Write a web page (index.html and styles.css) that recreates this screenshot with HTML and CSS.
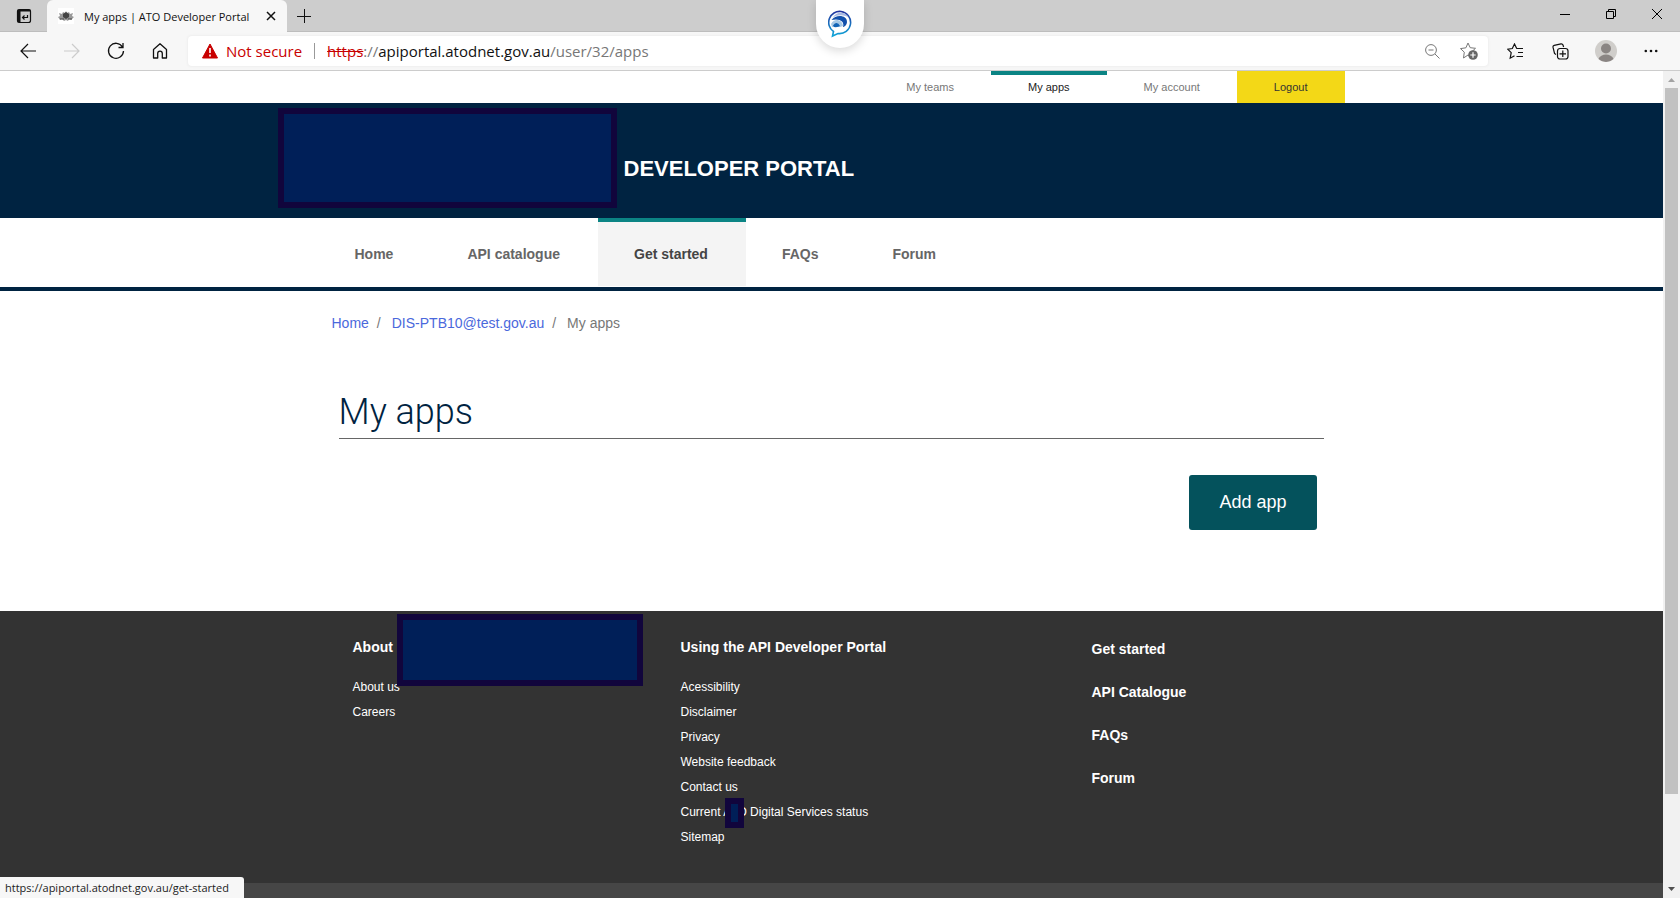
FILE: index.html
```html
<!DOCTYPE html>
<html lang="en">
<head>
<meta charset="utf-8">
<title>My apps | ATO Developer Portal</title>
<link rel="stylesheet" href="styles.css">
</head>
<body>
<div class="browser">
  <div class="tabbar">
    <button class="icon-btn tab-actions" aria-label="Tab actions"><svg width="16" height="16" viewBox="0 0 16 16"><rect x="1.5" y="1.5" width="13" height="13" rx="2" fill="none" stroke="#111" stroke-width="1.2"/><path d="M1.5 3h3v11.500h-3zM1.500 1.500h13v2h-13z" fill="#111"/><path d="M11.500 7v2.500h-5M8.500 7.500l-2 2 2 2" fill="none" stroke="#111" stroke-width="1.200"/></svg></button>
    <div class="tab">
      <svg width="16" height="16" viewBox="0 0 16 16"><rect width="16" height="16" fill="#fff"/><path d="M1 5l3 1 1-2 2 1 1-2 1 2 2-1 1 2 3-1-1 3 2 1-3 3-2-1-1 2-2-1-2 1-2-2-2 1-2-3 2-1z" fill="#999"/><path d="M5 6l3-2 3 2v3l-3 2-3-2z" fill="#444"/><path d="M2 11h4M10 11h4M7 7h2" stroke="#444"/></svg>
      <span class="tab-title">My apps | ATO Developer Portal</span>
      <button class="icon-btn tab-close" aria-label="Close tab"><svg width="10" height="10" viewBox="0 0 10 10"><path d="M1 1l8 8M9 1l-8 8" stroke="#111" stroke-width="1.500"/></svg></button>
    </div>
    <button class="icon-btn new-tab" aria-label="New tab"><svg width="14" height="14" viewBox="0 0 14 14"><path d="M7.500 0v14M0 7.500h14" stroke="#111"/></svg></button>
    <div class="window-controls">
      <button class="icon-btn" aria-label="Minimize"><svg width="10" height="10" viewBox="0 0 10 10"><path d="M0 5.500h10" stroke="#000"/></svg></button>
      <button class="icon-btn" aria-label="Restore"><svg width="10" height="10" viewBox="0 0 10 10"><path d="M.5 2.500h7v7h-7zM2.500 2.500v-2h7v7h-2" fill="none" stroke="#000"/></svg></button>
      <button class="icon-btn" aria-label="Close"><svg width="10" height="10" viewBox="0 0 10 10"><path d="M0 0l10 10M10 0L0 10" stroke="#000"/></svg></button>
    </div>
  </div>
  <div class="toolbar">
    <div class="nav-buttons">
      <button class="icon-btn" aria-label="Back"><svg width="16" height="16" viewBox="0 0 16 16"><path d="M16 8H1M8 1L1 8l7 7" fill="none" stroke="#111" stroke-width="1.200"/></svg></button>
      <button class="icon-btn" aria-label="Forward"><svg width="16" height="16" viewBox="0 0 16 16"><path d="M0 8h15M8 1l7 7-7 7" fill="none" stroke="#ccc" stroke-width="1.200"/></svg></button>
      <button class="icon-btn" aria-label="Refresh"><svg width="18" height="18" viewBox="0 0 18 18"><path d="M15.500 5A7.500 7.500 0 1 0 16.500 9M16 1v4.500h-4.500" fill="none" stroke="#111" stroke-width="1.300"/></svg></button>
      <button class="icon-btn" aria-label="Home"><svg width="16" height="16" viewBox="0 0 16 16"><path d="M1.500 6.500L8 .8l6.500 5.700V15h-4.200v-4.500a2.300 2.300 0 0 0-4.600 0V15H1.500z" fill="none" stroke="#111" stroke-width="1.300" stroke-linejoin="round"/></svg></button>
    </div>
    <div class="address">
      <svg width="16" height="16" viewBox="0 0 16 16"><path d="M8 1l7.500 14H.5z" fill="#c80000" stroke="#c80000" stroke-linejoin="round"/><path d="M8 5v5M8 11.500v2" stroke="#fff" stroke-width="1.600"/></svg>
      <span class="not-secure">Not secure</span>
      <span class="divider"></span>
      <span class="url"><s>https</s>://<b>apiportal.atodnet.gov.au</b>/user/32/apps</span>
      <button class="icon-btn zoom-btn" aria-label="Zoom"><svg width="15" height="15" viewBox="0 0 15 15"><circle cx="6" cy="6" r="5.400" fill="none" stroke="#777"/><path d="M3.500 6h5M10 10l4.500 4.500" stroke="#777"/></svg></button>
      <button class="icon-btn" aria-label="Add favorite"><svg width="18" height="18" viewBox="0 0 18 18"><path d="M8 1l2.200 4.700 5.300.6-4 3.700 1 5.500L8 13l-4.500 3 .8-5.800-3.800-3.600 5.400-.8z" fill="none" stroke="#777"/><circle cx="13" cy="13" r="4.800" fill="#666"/><path d="M13 10.300v5.400M10.300 13h5.400" stroke="#fff" stroke-width="1.200"/></svg></button>
    </div>
    <div class="toolbar-right">
      <button class="icon-btn" aria-label="Favorites"><svg width="17" height="17" viewBox="0 0 17 17"><path d="M9.700 5.500L7.500 1 5.300 5.500.7 6.200l3.500 3.400-1 5.600 4.300-2.500M9.500 5.500H16M11 9.500h5M9.500 13.500H16" fill="none" stroke="#111" stroke-width="1.200"/></svg></button>
      <button class="icon-btn" aria-label="Collections"><svg width="17" height="17" viewBox="0 0 17 17"><path d="M4 11.500L2.500 10.500 1 4.200Q.8 2.700 2.200 2.300L9 .8q1.500-.2 2 1.200l.6 2" fill="none" stroke="#111" stroke-width="1.200"/><rect x="5.500" y="5.500" width="10.500" height="10.500" rx="2.500" fill="none" stroke="#111" stroke-width="1.200"/><path d="M10.800 7.500v6.500M7.500 10.800h6.500" stroke="#111" stroke-width="1.200"/></svg></button>
      <button class="icon-btn" aria-label="Profile"><svg width="22" height="22" viewBox="0 0 22 22"><circle cx="11" cy="11" r="11" fill="#d0cecb"/><circle cx="11" cy="8.500" r="5" fill="#8a8583"/><path d="M3.500 19c2-6 13-6 15 0a11 11 0 0 1-15 0z" fill="#8a8583"/></svg></button>
      <button class="icon-btn" aria-label="Settings and more"><svg width="14" height="4" viewBox="0 0 14 4"><g fill="#111"><circle cx="1.800" cy="2" r="1.300"/><circle cx="7" cy="2" r="1.300"/><circle cx="12.200" cy="2" r="1.300"/></g></svg></button>
    </div>
  </div>
  <div class="chat-widget"><svg width="26" height="28" viewBox="0 0 26 28"><defs><linearGradient id="ring" x1="0" y1="0" x2="0" y2="1"><stop offset="0" stop-color="#2335a0"/><stop offset="1" stop-color="#10a5d8"/></linearGradient></defs><path d="M13 1.500a11 11 0 1 1-3 22L4.500 26l1-4.500A11 11 0 0 1 13 1.500z" fill="#fff" stroke="url(#ring)" stroke-width="1.600"/><path d="M4.500 8C8 1 18 1 21 8c-3-3-12-4-16.500 0z" fill="#a9b9e2"/><path d="M3.500 10C8 4 19 5 19 12c0 3-3 5-4 5 2-6-4-9-11.500-7z" fill="#1250ac"/><path d="M3 14c3-6 11-5 12 2l-3 1H4z" fill="#a7c9e6"/><path d="M5 15.500q4-5 7 .5-2 1.500-6 1z" fill="#1264b6"/></svg></div>
  <div class="viewport">
    <div class="page">
      <nav class="account-nav" aria-label="Account">
        <a href="#">My teams</a><a href="#" class="current">My apps</a><a href="#">My account</a><a href="#" class="logout">Logout</a>
      </nav>
      <header class="banner">
        <div class="container"><span class="redaction redaction-logo"></span><span class="brand">DEVELOPER PORTAL</span></div>
      </header>
      <div class="main-nav">
        <nav class="container" aria-label="Main">
          <a href="#">Home</a><a href="#">API catalogue</a><a href="#" class="current">Get started</a><a href="#">FAQs</a><a href="#">Forum</a>
        </nav>
      </div>
      <main class="container">
        <nav class="breadcrumb" aria-label="Breadcrumb"><a href="#">Home</a><span class="slash">/</span><a href="#">DIS-PTB10@test.gov.au</a><span class="slash">/</span><span>My apps</span></nav>
        <div class="content">
          <h1>My apps</h1>
          <div class="actions"><button class="add-app">Add app</button></div>
        </div>
      </main>
      <footer class="footer">
        <div class="container columns">
          <section>
            <h2>About<span class="redaction redaction-about"></span></h2>
            <ul><li><a href="#">About us</a></li><li><a href="#">Careers</a></li></ul>
          </section>
          <section>
            <h2>Using the API Developer Portal</h2>
            <ul><li><a href="#">Acessibility</a></li><li><a href="#">Disclaimer</a></li><li><a href="#">Privacy</a></li><li><a href="#">Website feedback</a></li><li><a href="#">Contact us</a></li><li><a href="#">Current <span class="masked">ATO<span class="redaction redaction-word"></span></span> Digital Services status</a></li><li><a href="#">Sitemap</a></li></ul>
          </section>
          <section class="quick"><a href="#">Get started</a><a href="#">API Catalogue</a><a href="#">FAQs</a><a href="#">Forum</a></section>
        </div>
      </footer>
      <div class="footer-base"></div>
    </div>
    <div class="scrollbar"><svg width="17" height="17" viewBox="0 0 17 17"><path d="M5 11l3.500-4 3.500 4z" fill="#a3a3a3"/></svg><div class="track"><div class="thumb"></div></div><svg width="17" height="17" viewBox="0 0 17 17"><path d="M5 6l3.500 4L12 6z" fill="#505050"/></svg></div>
    <div class="status">https://apiportal.atodnet.gov.au/get-started</div>
  </div>
</div>
</body>
</html>
```
FILE: styles.css
```css
* { box-sizing: border-box; }
body { margin: 0; background: #fff; font-family: "Liberation Sans", Arial, sans-serif; }
a { color: inherit; text-decoration: none; }
ul { list-style: none; margin: 0; padding: 0; }
svg { display: block; flex: none; }
.browser { display: flex; flex-direction: column; height: 100vh; overflow: hidden; position: relative; }
.icon-btn { display: flex; align-items: center; justify-content: center; padding: 0; border: 0; background: none; flex: none; }

.tabbar { display: flex; height: 32px; flex: none; background: #cdcdcd; border-bottom: 1px solid #bdbdbd; }
.tab-actions { width: 47px; }
.tab { display: flex; align-items: center; width: 240px; height: 32px; padding: 0 11px; background: #f7f7f7; border-radius: 6px 6px 0 0; font: 11px "Open Sans", "Noto Sans", sans-serif; color: #111; }
.tab-title { margin-left: 10px; white-space: nowrap; flex: 1; }
.new-tab { width: 34px; }
.window-controls { display: flex; margin-left: auto; }
.window-controls .icon-btn { width: 46px; height: 28px; }

.toolbar { display: flex; align-items: center; height: 39px; flex: none; background: #f7f7f7; border-bottom: 1px solid #ccc; }
.nav-buttons { display: flex; padding-left: 6px; width: 188px; }
.nav-buttons .icon-btn { width: 44px; height: 32px; }
.address { display: flex; align-items: center; flex: 1; height: 30px; padding: 0 10px 0 14px; background: #fff; border-radius: 4px; font: 15px "Open Sans", "Noto Sans", sans-serif; box-shadow: 0 0 3px #e4e4e4; }
.not-secure { margin-left: 8px; color: #c80000; }
.divider { width: 1px; height: 16px; margin: 0 12px; background: #999; }
.url { color: #777; white-space: nowrap; flex: 1; }
.url s { color: #c80000; }
.url b { color: #111; font-weight: 400; }
.zoom-btn { margin-right: 20px; }
.toolbar-right { display: flex; width: 192px; padding-left: 5px; }
.toolbar-right .icon-btn { width: 45px; height: 32px; }

.chat-widget { position: absolute; z-index: 2; top: 0; left: 50%; width: 48px; height: 48px; margin-left: -24px; padding: 10px 0 0 12px; background: #fff; border-radius: 0 0 24px 24px; box-shadow: 0 3px 10px rgba(0,0,0,.15); }

.viewport { display: flex; flex: 1; min-height: 0; position: relative; }
.page { flex: 1; min-width: 0; overflow: hidden; display: flex; flex-direction: column; }
.container { width: 1026px; margin: 0 auto; }

.account-nav { display: flex; justify-content: flex-end; width: 1026px; margin: 0 auto; height: 32px; flex: none; font-size: 11px; color: #777; }
.account-nav a { padding: 0 37px; border-top: 4px solid transparent; line-height: 24px; }
.account-nav .current { border-color: #0b8484; color: #222; }
.account-nav .logout { background: #f3d817; border-color: #f3d817; color: #333; }

.banner { background: #002341; height: 115px; flex: none; }
.banner .container { position: relative; padding: 52px 0 0 305px; }
.brand { font-size: 22px; line-height: 28px; font-weight: 700; color: #fff; }
.redaction { position: absolute; background: #001f58; border: 6px solid #11053c; }
.redaction-logo { left: -41px; top: 5px; width: 339px; height: 100px; }

.main-nav { flex: none; border-bottom: 4px solid #002341; height: 73px; }
.main-nav .container { display: flex; height: 68px; }
.main-nav a { padding: 0 38px 0 36px; border-top: 4px solid transparent; font-size: 14px; font-weight: 700; line-height: 64px; color: #666; }
.main-nav .current { background: #f4f4f4; border-color: #0b8484; color: #444; }

main { flex: none; height: 320px; }
.breadcrumb { display: flex; padding: 20px 0 0 13px; font-size: 14px; line-height: 24px; color: #777; }
.breadcrumb a { color: #4a68dc; }
.slash { margin: 0 11px 0 8px; }
.content { padding: 0 21px 0 20px; }
h1 { margin: 51px 0 0; padding: 1px 0 0; border-bottom: 1px solid #666; color: #002341; font: 300 36px/51px Roboto, "Liberation Sans", sans-serif; }
.actions { display: flex; justify-content: flex-end; padding: 36px 7px 0 0; }
.add-app { height: 55px; padding: 0 30px; border: 0; border-radius: 3px; background: #04525c; color: #fff; font: 18px "Liberation Sans", Arial, sans-serif; }

.footer { flex: none; height: 272px; background: #333; color: #fff; }
.columns { display: grid; grid-template-columns: 328px 411px 1fr; padding: 28px 0 0 34px; }
.columns h2 { position: relative; margin: 0 0 20px; font-size: 14px; line-height: 16px; }
.columns li { font-size: 12px; line-height: 25px; }
.quick { display: flex; flex-direction: column; gap: 27px; padding-top: 2px; font-size: 14px; line-height: 16px; font-weight: 700; }
.redaction-about { left: 44px; top: -25px; width: 246px; height: 72px; }
.masked { position: relative; }
.redaction-word { left: 2px; top: -7px; width: 19px; height: 30px; }
.footer-base { flex: 1; background: #464646; }

.scrollbar { display: flex; flex-direction: column; width: 17px; background: #f1f1f1; }
.track { flex: 1; padding: 0 2px; }
.thumb { height: 89%; background: #c1c1c1; }
.status { position: absolute; left: 0; bottom: 0; padding: 0 15px 0 5px; background: #f7f7f7; border-radius: 0 3px 0 0; color: #222; font: 11px/21px "Open Sans", "Noto Sans", sans-serif; }
```
